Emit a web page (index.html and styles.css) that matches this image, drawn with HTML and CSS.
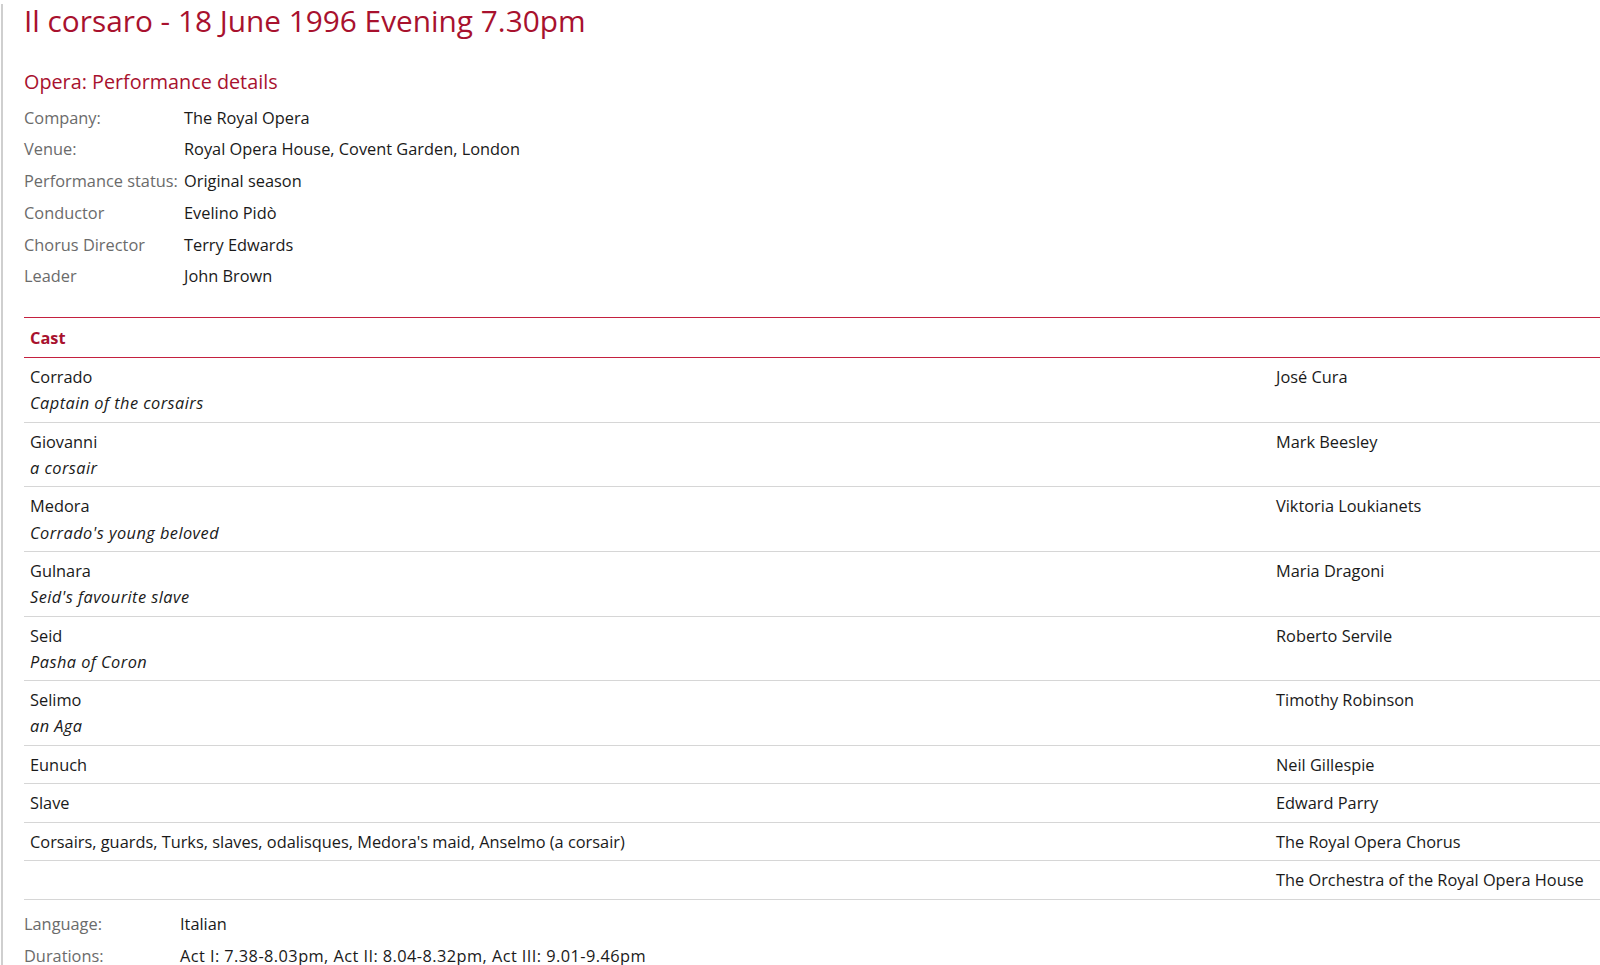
FILE: index.html
```html
<!doctype html>
<html lang="en">

<head>
    <meta charset="UTF-8">
    <title>Il corsaro - 18 June 1996 Evening 7.30pm</title>
    <link rel="stylesheet" href="styles.css">
</head>

<body>
    <div class="page">
        <h1 class="perf--title">Il corsaro - 18 June 1996 Evening 7.30pm</h1>

        <h2 class="perf--subtitle">Opera: Performance details</h2>
        <dl class="details">
            <dt>Company:</dt>
            <dd>The Royal Opera</dd>
            <dt>Venue:</dt>
            <dd>Royal Opera House, Covent Garden, London</dd>
            <dt>Performance status:</dt>
            <dd>Original season</dd>
            <dt>Conductor</dt>
            <dd>Evelino Pidò</dd>
            <dt>Chorus Director</dt>
            <dd>Terry Edwards</dd>
            <dt>Leader</dt>
            <dd>John Brown</dd>
        </dl>

        <div class="cast">
            <div class="cast--head">
                <div>Cast</div>
                <div></div>
            </div>
            <div class="cast--row">
                <div>Corrado<br><em>Captain of the corsairs</em></div>
                <div>José Cura</div>
            </div>
            <div class="cast--row">
                <div>Giovanni<br><em>a corsair</em></div>
                <div>Mark Beesley</div>
            </div>
            <div class="cast--row">
                <div>Medora<br><em>Corrado's young beloved</em></div>
                <div>Viktoria Loukianets</div>
            </div>
            <div class="cast--row">
                <div>Gulnara<br><em>Seid's favourite slave</em></div>
                <div>Maria Dragoni</div>
            </div>
            <div class="cast--row">
                <div>Seid<br><em>Pasha of Coron</em></div>
                <div>Roberto Servile</div>
            </div>
            <div class="cast--row">
                <div>Selimo<br><em>an Aga</em></div>
                <div>Timothy Robinson</div>
            </div>
            <div class="cast--row">
                <div>Eunuch</div>
                <div>Neil Gillespie</div>
            </div>
            <div class="cast--row">
                <div>Slave</div>
                <div>Edward Parry</div>
            </div>
            <div class="cast--row">
                <div>Corsairs, guards, Turks, slaves, odalisques, Medora's maid, Anselmo (a corsair)</div>
                <div>The Royal Opera Chorus</div>
            </div>
            <div class="cast--row">
                <div></div>
                <div>The Orchestra of the Royal Opera House</div>
            </div>
        </div>

        <dl class="details details--extra">
            <dt>Language:</dt>
            <dd>Italian</dd>
            <dt>Durations:</dt>
            <dd class="durations">Act I: 7.38-8.03pm, Act II: 8.04-8.32pm, Act III: 9.01-9.46pm</dd>
        </dl>
    </div>
</body>

</html>
```
FILE: styles.css
```css
body {
    margin: 0;
    font-family: "Open Sans", "Noto Sans", sans-serif;
    font-size: 16.35px;
    color: #1a1a1a;
    background: #ffffff;
}

.page {
    margin-left: 1px;
    border-left: 2px solid #cfcfcf;
    padding-left: 21px;
    min-height: 965px;
    box-sizing: border-box;
}

.perf--title {
    font-size: 29.8px;
    font-weight: normal;
    line-height: 34px;
    color: #a8112e;
    margin: 4px 0 0;
}

.perf--subtitle {
    font-size: 19.8px;
    font-weight: normal;
    line-height: 26px;
    color: #a8112e;
    margin: 31px 0 0;
}

.details {
    display: grid;
    grid-template-columns: 160px auto;
    margin: 7.5px 0 0;
    line-height: 31.8px;
}

.details dt {
    color: #6b6b6b;
}

.details dd {
    margin: 0;
}

.cast {
    margin-top: 24px;
    border-top: 1px solid #c4203f;
}

.cast--head,
.cast--row {
    display: grid;
    grid-template-columns: 1fr 330px;
}

.cast--head {
    border-bottom: 1px solid #c4203f;
    color: #a8112e;
    font-weight: bold;
    line-height: 26px;
    padding: 7px 0 6px;
}

.cast--head div,
.cast--row div {
    padding: 0 6px;
}

.cast--row {
    line-height: 26.1px;
    padding: 6px 0 5.4px;
    border-bottom: 1px solid #d6d6d6;
}

.cast--row em {
    font-style: italic;
    letter-spacing: 0.45px;
}

.details--extra {
    grid-template-columns: 156px auto;
    margin-top: 8px;
    line-height: 32px;
}

.durations {
    letter-spacing: 0.43px;
}
```
